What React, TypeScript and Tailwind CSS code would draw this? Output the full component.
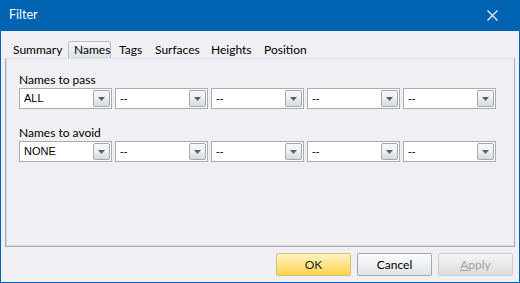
import React from "react";

const seg = { fontFamily: 'Lato, "Noto Sans", sans-serif' };
const ari = { fontFamily: '"Liberation Sans", Arial, sans-serif' };

function Combo({ value }: { value: string }) {
  return (
    <div className="w-[93px] h-[21px] border border-[#abadb3] bg-white flex items-center pr-[1px] py-[1px]">
      <span className="flex-1 pl-[4px] text-[11px] text-black leading-none" style={ari}>
        {value}
      </span>
      <div className="w-[17px] h-[17px] rounded-[2px] border border-[#a4a8b0] bg-gradient-to-b from-[#f6f7f9] via-[#eceef2] to-[#d6dbe3] flex items-center justify-center">
        <svg width="7" height="4" viewBox="0 0 7 4">
          <path d="M0 0 H7 L3.5 4 Z" fill="#5a5e66" />
        </svg>
      </div>
    </div>
  );
}

function Row({ label, first }: { label: string; first: string }) {
  return (
    <div className="flex flex-col">
      <div className="h-[15px] text-[12px] leading-[15px] text-black" style={seg}>
        {label}
      </div>
      <div className="flex gap-[3px] mt-[1px]">
        <Combo value={first} />
        <Combo value="--" />
        <Combo value="--" />
        <Combo value="--" />
        <Combo value="--" />
      </div>
    </div>
  );
}

export default function App() {
  const tabs = [
    { t: "Summary", w: "w-[61px]", pl: "pl-[6px]" },
    { t: "Names", w: "w-[43px]", pl: "pl-[5px]", sel: true },
    { t: "Tags", w: "w-[38px]", pl: "pl-[8px]" },
    { t: "Surfaces", w: "w-[56px]", pl: "pl-[6px]" },
    { t: "Heights", w: "w-[53px]", pl: "pl-[6px]" },
    { t: "Position", w: "w-[60px]", pl: "pl-[6px]" },
  ];
  return (
    <div className="w-[520px] h-[283px] flex flex-col bg-[#0063b1] overflow-hidden">
      <div className="h-[31px] flex items-center justify-between pl-[9px] pr-[22px]">
        <span className="text-white text-[12.5px]" style={seg}>
          Filter
        </span>
        <svg width="11" height="11" viewBox="0 0 11 11">
          <path d="M0.5 0.5 L10.5 10.5 M10.5 0.5 L0.5 10.5" stroke="white" strokeWidth="1.1" />
        </svg>
      </div>
      <div className="flex-1 mx-[1px] mb-[1px] bg-[#efeff4] flex flex-col pl-[4px] pr-[4px]">
        <div className="flex h-[27px] pt-[10px] pl-[2px] relative z-10">
          {tabs.map((tb) =>
            tb.sel ? (
              <div
                key={tb.t}
                className={`${tb.w} h-[17px] ${tb.pl} rounded-t-[3px] border border-b-0 border-[#b7bec9] bg-gradient-to-b from-[#f7f8fa] to-[#d9e2e9] text-[12px] leading-[15px] text-black`}
                style={seg}
              >
                {tb.t}
              </div>
            ) : (
              <div key={tb.t} className={`${tb.w} h-[17px] ${tb.pl} pt-[1px] text-[12px] leading-[15px] text-black`} style={seg}>
                {tb.t}
              </div>
            )
          )}
        </div>
        <div className="h-[189px] border-t border-t-[#dcdfe5] border-l border-r border-b border-[#a9acb4] shadow-[inset_1px_-1px_0_#d6d9df] pl-[13px] pt-[13px] flex flex-col gap-[16px]">
          <Row label="Names to pass" first="ALL" />
          <Row label="Names to avoid" first="NONE" />
        </div>
        <div className="flex justify-end gap-[6px] mt-[6px] pr-[2px]">
          <button
            className="w-[75px] h-[23px] border border-[#d5c07a] rounded-[2px] bg-gradient-to-b from-[#fff3c4] via-[#ffe38a] to-[#ffd443] text-[12px] text-[#1e1e1e]"
            style={seg}
          >
            OK
          </button>
          <button
            className="w-[75px] h-[23px] border border-[#a3a7ae] rounded-[2px] bg-gradient-to-b from-[#fbfbfc] via-[#eef0f3] to-[#dfe2e8] text-[12px] text-black"
            style={seg}
          >
            Cancel
          </button>
          <button
            className="w-[75px] h-[23px] border border-[#cdcdcf] rounded-[2px] bg-gradient-to-b from-[#f4f4f5] via-[#e9e9ea] to-[#dcdcde] text-[12px] text-[#a3a3a3]"
            style={seg}
          >
            <span className="underline">A</span>pply
          </button>
        </div>
      </div>
    </div>
  );
}
